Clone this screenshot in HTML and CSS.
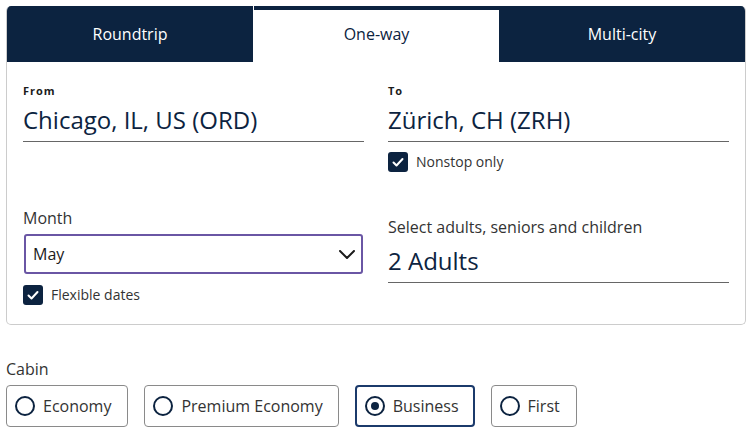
FILE: index.html
```html
<!DOCTYPE html>
<html lang="en">
<head>
<meta charset="utf-8">
<title>Flight search</title>
<link rel="stylesheet" href="styles.css">
</head>
<body>
<div class="card">
  <div class="tabs">
    <div class="tab">Roundtrip</div>
    <div class="tab tab-active">One-way</div>
    <div class="tab">Multi-city</div>
  </div>
  <div class="form">
    <div class="col">
      <div class="field">
        <div class="small-label">From</div>
        <div class="value">Chicago, IL, US (ORD)</div>
      </div>
      <div class="month-label">Month</div>
      <div class="select">
        <span>May</span>
        <svg class="chevron" width="16" height="9" viewBox="0 0 16 9"><polyline points="1,1 8,8 15,1" fill="none" stroke="#1b1b1b" stroke-width="2" stroke-linecap="round" stroke-linejoin="round"/></svg>
      </div>
      <div class="check check-flex">
        <svg width="20" height="20" viewBox="0 0 20 20"><rect width="20" height="20" rx="3" fill="#0c2340"/><polyline points="5.5,10.5 8.5,13.5 14.5,7" fill="none" stroke="#fff" stroke-width="2" stroke-linecap="round" stroke-linejoin="round"/></svg>
        <span>Flexible dates</span>
      </div>
    </div>
    <div class="col">
      <div class="field">
        <div class="small-label">To</div>
        <div class="value">Zürich, CH (ZRH)</div>
      </div>
      <div class="check check-nonstop">
        <svg width="20" height="20" viewBox="0 0 20 20"><rect width="20" height="20" rx="3" fill="#0c2340"/><polyline points="5.5,10.5 8.5,13.5 14.5,7" fill="none" stroke="#fff" stroke-width="2" stroke-linecap="round" stroke-linejoin="round"/></svg>
        <span>Nonstop only</span>
      </div>
      <div class="pax-label">Select adults, seniors and children</div>
      <div class="field pax">
        <div class="value">2 Adults</div>
      </div>
    </div>
  </div>
</div>
<div class="cabin">
  <div class="cabin-label">Cabin</div>
  <div class="options">
    <div class="option"><span class="radio"></span><span>Economy</span></div>
    <div class="option option-wide"><span class="radio"></span><span>Premium Economy</span></div>
    <div class="option option-selected"><span class="radio radio-on"></span><span>Business</span></div>
    <div class="option"><span class="radio"></span><span>First</span></div>
  </div>
</div>
</body>
</html>
```

FILE: styles.css
```css
* { box-sizing: border-box; }

body {
  margin: 6px 7px 0 6px;
  font-family: "Open Sans", "Liberation Sans", sans-serif;
  color: #333333;
  background: #ffffff;
}

.card {
  width: 740px;
  border: 1px solid #cccccc;
  border-top: none;
  border-radius: 5px;
  overflow: hidden;
}

.tabs {
  display: grid;
  grid-template-columns: 1fr 1fr 1fr;
  height: 56px;
}

.tab {
  display: flex;
  align-items: center;
  justify-content: center;
  background: #0c2340;
  color: #ffffff;
  font-size: 16px;
}

.tab-active {
  background: #ffffff;
  color: #0c2340;
  box-shadow: inset 0 4px 0 #0c2340;
  margin-left: 1px;
}

.form {
  display: grid;
  grid-template-columns: 1fr 1fr;
  column-gap: 24px;
  padding: 22px 16px 19px 16px;
}

.col {
  display: flex;
  flex-direction: column;
}

.small-label {
  font-size: 11px;
  line-height: 14px;
  font-weight: 700;
  letter-spacing: 1px;
  color: #1b1b1b;
}

.field {
  border-bottom: 1px solid #666666;
}

.value {
  margin-top: 6px;
  font-size: 24px;
  line-height: 32px;
  color: #0c2340;
  padding-bottom: 5px;
}

.pax .value {
  margin-top: 0;
}

.month-label {
  margin-top: 65px;
  font-size: 16px;
  line-height: 22px;
}

.select {
  margin-top: 5px;
  margin-left: 1px;
  width: 339px;
  height: 40px;
  border: 2px solid #6a56a4;
  border-radius: 3px;
  display: flex;
  align-items: center;
  justify-content: space-between;
  padding: 0 6px 0 7px;
  font-size: 16px;
  color: #1b1b1b;
}

.chevron {
  display: block;
}

.check {
  display: flex;
  align-items: center;
  gap: 8px;
  font-size: 14px;
  line-height: 20px;
  color: #333333;
}

.check svg {
  display: block;
  flex: none;
}

.check-flex {
  margin-top: 11px;
}

.check-nonstop {
  margin-top: 10px;
}

.pax-label {
  margin-top: 44px;
  font-size: 16px;
  line-height: 22px;
}

.pax {
  margin-top: 7px;
}

.cabin-label {
  margin-top: 33px;
  font-size: 16px;
  line-height: 22px;
}

.options {
  margin-top: 5px;
  display: flex;
  gap: 16px;
}

.option {
  height: 42px;
  display: flex;
  align-items: center;
  gap: 8px;
  padding: 0 16px 0 8px;
  border: 1px solid #8a8a8a;
  border-radius: 4px;
  font-size: 16px;
  color: #333333;
}

.option-wide {
  padding-right: 15px;
}

.option-selected {
  border: 2px solid #1b3a6b;
  padding: 0 14px 0 8px;
}

.radio {
  width: 20px;
  height: 20px;
  border: 2px solid #0c2340;
  border-radius: 50%;
  display: flex;
  align-items: center;
  justify-content: center;
  flex: none;
}

.radio-on::after {
  content: "";
  width: 8px;
  height: 8px;
  border-radius: 50%;
  background: #0c2340;
}
```
